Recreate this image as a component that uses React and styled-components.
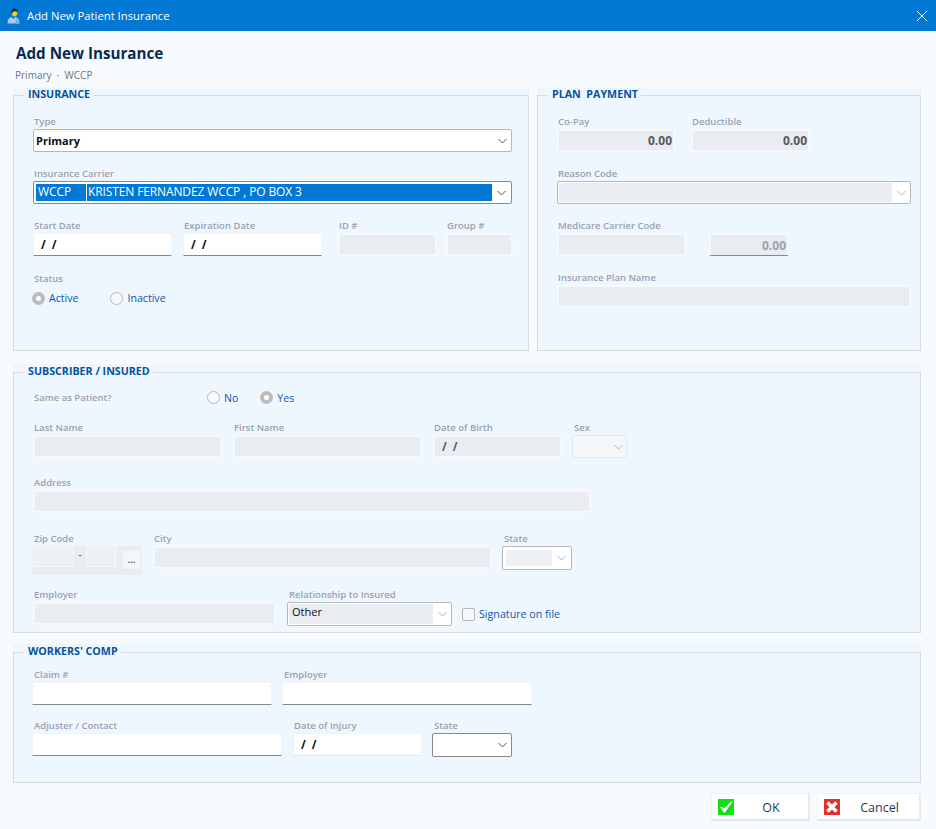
import React from 'react'
import styled, { createGlobalStyle } from 'styled-components'

const Global = createGlobalStyle`
  html, body {
    margin: 0;
    padding: 0;
    background: #f8fbfe;
  }
  * { box-sizing: border-box; }
`

const Window = styled.div`
  width: 936px;
  height: 829px;
  overflow: hidden;
  background: #f8fbfe;
  font-family: "Open Sans", "Noto Sans", "Liberation Sans", sans-serif;
  display: flex;
  flex-direction: column;
`

const TitleBar = styled.div`
  height: 31px;
  flex: none;
  background: #0078d4;
  display: flex;
  align-items: center;
  padding: 0 8px 0 7px;
  color: #fff;
  font-size: 11.3px;
  & .title { margin-left: 7px; flex: 1; }
`

const Content = styled.div`
  padding: 0 15px 0 13px;
  flex: 1;
  display: flex;
  flex-direction: column;
`

const Heading = styled.h1`
  margin: 12px 0 0 3px;
  font-size: 15.2px;
  line-height: 20px;
  font-weight: 700;
  color: #0b2a52;
`

const SubHeading = styled.div`
  margin: 5px 0 0 2px;
  font-size: 10px;
  line-height: 14px;
  color: #6c7488;
`

const TopPanels = styled.div`
  display: flex;
  gap: 8px;
  margin-top: 5px;
`

const Panel = styled.div`
  background: #eff7fe;
  width: ${({ width }) => (width ? `${width}px` : '100%')};
  height: ${({ height }) => height}px;
  margin-top: ${({ top }) => top || 0}px;
  flex: none;
`

const Group = styled.fieldset`
  margin: 0;
  padding: ${({ pad }) => (pad === undefined ? 11 : pad)}px 0 0 19px;
  height: 100%;
  min-width: 0;
  border: 1px solid #d5dbe2;
`

const Legend = styled.legend`
  margin-left: -9px;
  padding: 0 3px 0 4px;
  height: 16px;
  font-size: 10.7px;
  line-height: 15px;
  font-weight: 700;
  color: #05539c;
`

const Row = styled.div`
  display: flex;
  height: ${({ height }) => height || 38}px;
  margin-bottom: ${({ gap }) => (gap === undefined ? 14 : gap)}px;
  margin-left: ${({ shift }) => shift || 0}px;
`

const Field = styled.div`
  width: ${({ width }) => width}px;
  margin-right: ${({ after }) => after || 0}px;
  flex: none;
`

const Label = styled.div`
  height: 15px;
  padding-left: ${({ indent }) => indent || 1}px;
  font-size: 9.5px;
  line-height: 15px;
  font-weight: 600;
  color: #9aa1b0;
  white-space: nowrap;
`

const Input = styled.div`
  height: 23px;
  display: flex;
  align-items: center;
  justify-content: ${({ right }) => (right ? 'flex-end' : 'flex-start')};
  padding: 0 ${({ right }) => (right ? '1px' : '0')} 0 ${({ right }) => (right ? '0' : '7px')};
  background: ${({ off }) => (off ? '#e9edf1' : '#fff')};
  border: ${({ off }) => (off ? '2px solid #f6f8fa' : '1px solid #f1f3f5')};
  border-bottom: ${({ line, off }) => (line ? '1px solid #85888c' : off ? '2px solid #f6f8fa' : '1px solid #e2e5e8')};
  border-radius: 1px;
  font-size: ${({ right }) => (right ? 12 : 11.5)}px;
  font-weight: 700;
  color: ${({ off, tone }) => tone || (off ? '#55585e' : '#0b0f16')};
  word-spacing: ${({ right }) => (right ? 0 : '3px')};
`

const Select = styled.div`
  height: ${({ tall }) => tall || 23}px;
  display: flex;
  align-items: stretch;
  background: ${({ blank }) => (blank ? '#f5f6f7' : '#fff')};
  border: 1px solid ${({ dark, blank }) => (dark ? '#858a90' : blank ? '#e6e8eb' : '#b4b8bd')};
  border-radius: 2px;
  padding: ${({ inset }) => inset || 0}px 0 ${({ inset }) => inset || 0}px ${({ inset }) => inset || 0}px;
`

const SelectValue = styled.div`
  flex: 1;
  min-width: 0;
  display: flex;
  align-items: ${({ high }) => (high ? 'flex-start' : 'center')};
  padding-left: ${({ pad }) => pad || 0}px;
  background: ${({ fill }) => fill || 'transparent'};
  font-size: ${({ size }) => size || 11}px;
  line-height: ${({ high }) => (high ? '15px' : 'normal')};
  font-weight: ${({ bold }) => (bold ? 700 : 400)};
  color: #0b0f16;
`

const Caret = styled.div`
  width: ${({ width }) => width || 17}px;
  flex: none;
  display: flex;
  align-items: center;
  justify-content: center;
`

const CarrierCode = styled.div`
  width: 51px;
  height: 100%;
  padding-left: 2px;
  border-right: 1px solid #fff;
  color: #fff;
  font-size: 12px;
  line-height: 15px;
  letter-spacing: -0.1px;
`

const CarrierName = styled.div`
  padding-left: 1px;
  height: 100%;
  color: #fff;
  font-size: 12px;
  line-height: 15px;
  letter-spacing: -0.12px;
  white-space: nowrap;
`

const RadioRow = styled.div`
  display: flex;
  align-items: center;
  height: ${({ height }) => height || 23}px;
  margin-left: ${({ shift }) => shift || 0}px;
`

const RadioDot = styled.span`
  width: 13px;
  height: 13px;
  flex: none;
  border-radius: 50%;
  background: ${({ on }) => (on ? '#fff' : '#f8f9fa')};
  border: ${({ on }) => (on ? '4px solid #b9bbbd' : '1px solid #b6b8ba')};
`

const OptionText = styled.span`
  margin-left: 4px;
  margin-right: ${({ after }) => after || 0}px;
  font-size: 10.6px;
  color: #0b58a8;
`

const PlainLabel = styled(Label)`
  width: ${({ width }) => width}px;
  line-height: 23px;
  height: 23px;
  flex: none;
`

const ZipWrap = styled.div`
  width: 110px;
  height: 29px;
  margin-left: -1px;
  background: #e9edf1;
  display: flex;
  align-items: flex-start;
  padding-left: 1px;
`

const ZipPart = styled.div`
  width: ${({ width }) => width}px;
  height: 21px;
  background: #eff0f1;
  border: 1px solid #f6f8fa;
`

const ZipDash = styled.div`
  width: 12px;
  text-align: center;
  font-size: 10px;
  line-height: 17px;
  color: #444;
`

const ZipButton = styled.div`
  width: 19px;
  height: 19px;
  margin: 4px 0 0 6px;
  background: #f5f6f8;
  border: 1px solid #eef0f2;
  text-align: center;
  font-size: 9px;
  line-height: 17px;
  font-weight: 700;
  color: #555;
`

const Check = styled.span`
  width: 13px;
  height: 13px;
  flex: none;
  background: #f6f7f8;
  border: 1px solid #b4b7ba;
  border-radius: 2px;
`

const SignatureWrap = styled.div`
  display: flex;
  align-items: center;
  height: 24px;
  margin: 15px 0 0 10px;
  & span:last-child {
    margin-left: 4px;
    font-size: 10.7px;
    color: #0b58a8;
    white-space: nowrap;
  }
`

const Footer = styled.div`
  display: flex;
  justify-content: flex-end;
  gap: 7px;
  margin-top: 10px;
`

const Button = styled.button`
  width: ${({ width }) => width}px;
  height: 28px;
  display: flex;
  align-items: center;
  padding: 1px 0 0 6px;
  background: #fff;
  border: 1px solid #eef1f5;
  border-bottom: 2px solid #dfe5ec;
  border-right: 2px solid #e8ecf1;
  font-family: inherit;
  font-size: 12.5px;
  color: #24385e;
  & span {
    flex: 1;
    text-align: center;
  }
`

const Chevron = ({ color = '#555' }) => (
  <svg width="9" height="6" viewBox="0 0 9 6">
    <path d="M0.5 1 L4.5 5 L8.5 1" fill="none" stroke={color} strokeWidth="1" />
  </svg>
)

const PatientIcon = () => (
  <svg width="13" height="16" viewBox="0 0 13 16">
    <path d="M0.5 15.5 C0.5 11.5 2 9.5 4.5 9 L6.5 11 L8.5 9 C11 9.5 12.5 11.5 12.5 15.5 Z" fill="#a9cdf0" />
    <path d="M9 9.5 C11 10.5 12 12.5 12.5 15.5 L8.5 15.5 Z" fill="#7fb2e4" />
    <ellipse cx="7.5" cy="5" rx="2.6" ry="3.6" fill="#f5cc22" />
    <path d="M4.5 6 C4 2.5 5.5 0.5 7.5 0.5 C9.5 0.5 10.8 2 10.5 4 C9 2.8 6.5 3 5.6 4.5 Z" fill="#1c2a40" />
  </svg>
)

const CloseIcon = () => (
  <svg width="12" height="12" viewBox="0 0 12 12">
    <path d="M1 1 L11 11 M11 1 L1 11" stroke="#fff" strokeWidth="1" fill="none" />
  </svg>
)

const OkIcon = () => (
  <svg width="16" height="16" viewBox="0 0 16 16">
    <rect width="16" height="16" fill="#0fe00f" />
    <path d="M2.5 8 L6.5 13.5 L14 2.5 L6.5 9.5 Z" fill="#fff" stroke="#fff" strokeWidth="1" />
  </svg>
)

const CancelIcon = () => (
  <svg width="16" height="16" viewBox="0 0 16 16">
    <rect width="16" height="16" fill="#e2302a" />
    <path d="M3.5 3.5 L12.5 12.5 M12.5 3.5 L3.5 12.5" stroke="#fff" strokeWidth="3.6" fill="none" />
  </svg>
)

const TextField = ({ label, width, after, indent, ...rest }) => (
  <Field width={width} after={after}>
    <Label indent={indent}>{label}</Label>
    <Input {...rest} />
  </Field>
)

const App = () => (
  <Window>
    <Global />
    <TitleBar>
      <PatientIcon />
      <span className="title">Add New Patient Insurance</span>
      <CloseIcon />
    </TitleBar>
    <Content>
      <Heading>Add New Insurance</Heading>
      <SubHeading>Primary&nbsp; ·&nbsp; WCCP</SubHeading>

      <TopPanels>
        <Panel width={516} height={264}>
          <Group>
            <Legend>INSURANCE</Legend>
            <Row>
              <Field width={479}>
                <Label>Type</Label>
                <Select>
                  <SelectValue bold pad={2}>Primary</SelectValue>
                  <Caret><Chevron /></Caret>
                </Select>
              </Field>
            </Row>
            <Row>
              <Field width={479}>
                <Label>Insurance Carrier</Label>
                <Select dark inset={2}>
                  <SelectValue fill="#0078d4">
                    <CarrierCode>WCCP</CarrierCode>
                    <CarrierName>KRISTEN FERNANDEZ WCCP , PO BOX 3</CarrierName>
                  </SelectValue>
                  <Caret width={19}><Chevron /></Caret>
                </Select>
              </Field>
            </Row>
            <Row gap={15}>
              <TextField label="Start Date" width={139} after={11} line>/ /</TextField>
              <TextField label="Expiration Date" width={139} after={16} line>/ /</TextField>
              <TextField label="ID #" width={99} after={9} off />
              <TextField label="Group #" width={67} off />
            </Row>
            <Row height={42} gap={0}>
              <Field width={200}>
                <Label>Status</Label>
                <RadioRow height={24} shift={-1}>
                  <RadioDot on />
                  <OptionText after={32}>Active</OptionText>
                  <RadioDot />
                  <OptionText>Inactive</OptionText>
                </RadioRow>
              </Field>
            </Row>
          </Group>
        </Panel>

        <Panel width={384} height={264}>
          <Group>
            <Legend>PLAN&nbsp; PAYMENT</Legend>
            <Row>
              <TextField label="Co-Pay" width={118} after={16} off right>0.00</TextField>
              <TextField label="Deductible" width={119} off right>0.00</TextField>
            </Row>
            <Row>
              <Field width={354}>
                <Label>Reason Code</Label>
                <Select inset={1}>
                  <SelectValue fill="#e9edf1" />
                  <Caret width={18}><Chevron color="#aab0b6" /></Caret>
                </Select>
              </Field>
            </Row>
            <Row>
              <TextField label="Medicare Carrier Code" width={129} after={23} off />
              <TextField label=" " width={80} off right line tone="#9aa3ae">0.00</TextField>
            </Row>
            <Row gap={0}>
              <TextField label="Insurance Plan Name" width={354} off />
            </Row>
          </Group>
        </Panel>
      </TopPanels>

      <Panel width={908} height={269} top={13}>
        <Group pad={6}>
          <Legend>SUBSCRIBER / INSURED</Legend>
          <Row height={23} gap={11}>
            <PlainLabel width={174}>Same as Patient?</PlainLabel>
            <RadioRow>
              <RadioDot />
              <OptionText after={22}>No</OptionText>
              <RadioDot on />
              <OptionText>Yes</OptionText>
            </RadioRow>
          </Row>
          <Row gap={17}>
            <TextField label="Last Name" width={189} after={11} off />
            <TextField label="First Name" width={189} after={11} off />
            <TextField label="Date of Birth" width={129} after={10} off>/ /</TextField>
            <Field width={55}>
              <Label indent={2}>Sex</Label>
              <Select blank>
                <SelectValue />
                <Caret width={16}><Chevron color="#aab0b6" /></Caret>
              </Select>
            </Field>
          </Row>
          <Row gap={18}>
            <TextField label="Address" width={558} off />
          </Row>
          <Row height={44} gap={12}>
            <Field width={120}>
              <Label>Zip Code</Label>
              <ZipWrap>
                <ZipPart width={41} />
                <ZipDash>-</ZipDash>
                <ZipPart width={30} />
                <ZipButton>...</ZipButton>
              </ZipWrap>
            </Field>
            <TextField label="City" width={339} after={10} off />
            <Field width={70}>
              <Label indent={2}>State</Label>
              <Select tall={24} inset={3}>
                <SelectValue fill="#eff0f1" />
                <Caret width={19}><Chevron color="#aab0b6" /></Caret>
              </Select>
            </Field>
          </Row>
          <Row gap={0}>
            <TextField label="Employer" width={243} after={11} off />
            <Field width={165}>
              <Label indent={2}>Relationship to Insured</Label>
              <Select tall={24} inset={1}>
                <SelectValue fill="#e9edf1" pad={3} high>Other</SelectValue>
                <Caret width={18}><Chevron color="#aab0b6" /></Caret>
              </Select>
            </Field>
            <SignatureWrap>
              <Check />
              <span>Signature on file</span>
            </SignatureWrap>
          </Row>
        </Group>
      </Panel>

      <Panel width={908} height={139} top={11}>
        <Group pad={7}>
          <Legend>WORKERS' COMP</Legend>
          <Row gap={13} shift={-1}>
            <TextField label="Claim #" width={240} after={10} indent={2} line />
            <TextField label="Employer" width={250} indent={2} line />
          </Row>
          <Row gap={0} shift={-1}>
            <TextField label="Adjuster / Contact" width={250} after={11} indent={2} line />
            <TextField label="Date of Injury" width={129} after={10}>/ /</TextField>
            <Field width={80}>
              <Label indent={2}>State</Label>
              <Select tall={24} dark>
                <SelectValue />
                <Caret><Chevron /></Caret>
              </Select>
            </Field>
          </Row>
        </Group>
      </Panel>

      <Footer>
        <Button width={99}><OkIcon /><span>OK</span></Button>
        <Button width={104}><CancelIcon /><span>Cancel</span></Button>
      </Footer>
    </Content>
  </Window>
)

export default App
